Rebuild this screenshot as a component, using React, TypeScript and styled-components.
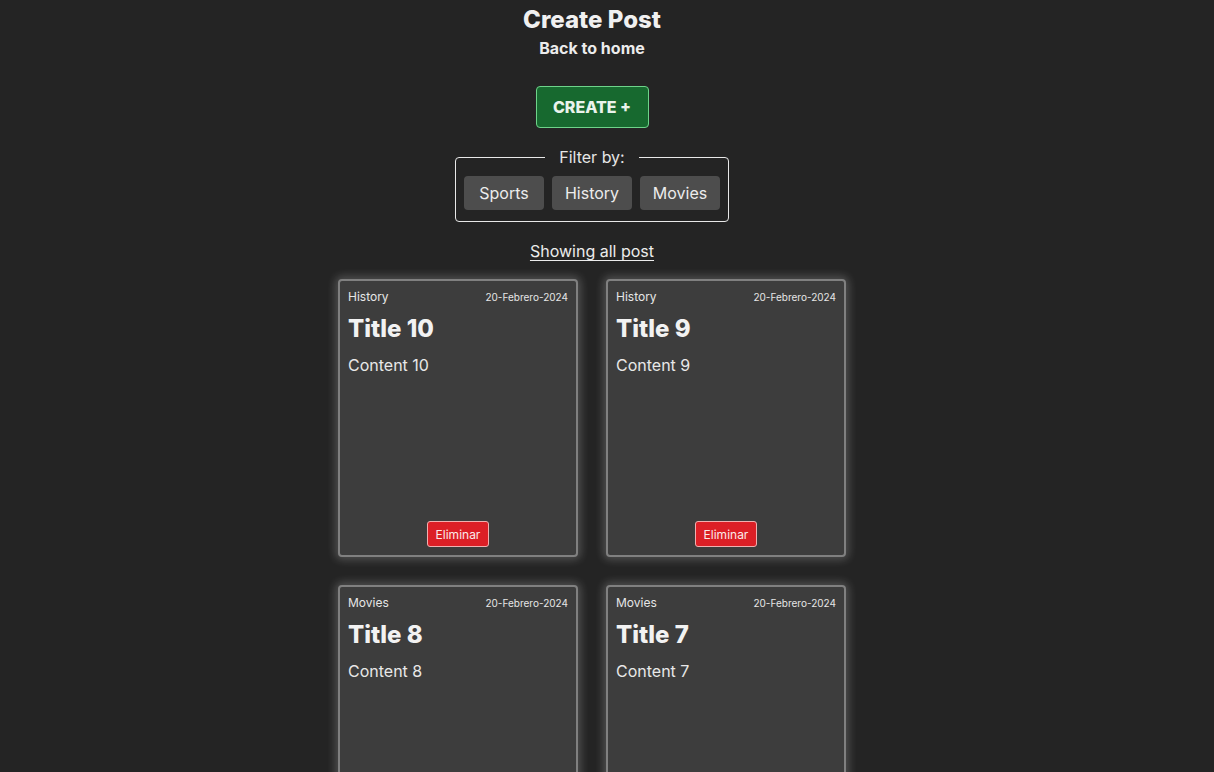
import React from "react";
import styled, { createGlobalStyle } from "styled-components";

const Global = createGlobalStyle`
  html, body { margin: 0; padding: 0; background: #242424; }
  body {
    font-family: Inter, "Noto Sans", sans-serif;
    color: rgba(255,255,255,0.87);
  }
  * { box-sizing: border-box; }
`;

const Page = styled.div`
  width: 1184px;
  display: flex;
  flex-direction: column;
  align-items: center;
  padding-top: 5px;
`;

const Title = styled.h1`
  margin: 0;
  font-size: 24px;
  line-height: 30px;
  font-weight: 800;
  color: #f0f0f0;
`;

const BackLink = styled.a`
  margin-top: 3px;
  font-size: 16px;
  font-weight: 700;
  line-height: 20px;
  color: #ececec;
  text-decoration: none;
`;

const CreateButton = styled.button`
  margin-top: 28px;
  width: 113px;
  height: 42px;
  background: #17692f;
  border: 1px solid #6ed38a;
  border-radius: 4px;
  color: #eaf3ec;
  font-family: inherit;
  font-size: 16px;
  font-weight: 800;
`;

const Filter = styled.fieldset`
  margin: 20px 0 0;
  width: 274px;
  padding: 10px 8px 11px;
  border: 1px solid #e8e8e8;
  border-radius: 4px;
  display: flex;
  gap: 8px;
  justify-content: center;
`;

const Legend = styled.legend`
  padding: 0 14px;
  margin: 0 auto;
  font-size: 16px;
  line-height: 18px;
  color: #e6e6e6;
`;

const FilterButton = styled.button`
  width: 80px;
  height: 34px;
  border: none;
  border-radius: 4px;
  background: #4d4d4d;
  color: #ececec;
  font-family: inherit;
  font-size: 16px;
`;

const Showing = styled.a`
  margin-top: 18px;
  font-size: 16px;
  line-height: 22px;
  color: #ececec;
  text-decoration: underline;
  text-underline-offset: 3px;
`;

const Grid = styled.div`
  margin-top: 17px;
  display: grid;
  grid-template-columns: 240px 240px;
  gap: 28px;
`;

const Card = styled.article`
  width: 240px;
  height: 278px;
  background: #3d3d3d;
  border: 2px solid #808080;
  border-radius: 4px;
  box-shadow: 0 0 9px 3px rgba(255, 255, 255, 0.2);
  padding: 8px;
  display: flex;
  flex-direction: column;
`;

const CardHead = styled.div`
  display: flex;
  justify-content: space-between;
  align-items: center;
`;

const Category = styled.span`
  font-size: 12px;
  color: #e6e6e6;
`;

const DateText = styled.span`
  font-size: 10px;
  color: #e6e6e6;
`;

const CardTitle = styled.h2`
  margin: 10px 0 0;
  font-size: 24px;
  line-height: 30px;
  font-weight: 800;
  color: #f2f2f2;
`;

const Content = styled.p`
  margin: 11px 0 0;
  font-size: 16px;
  line-height: 20px;
  color: #e8e8e8;
`;

const DeleteButton = styled.button`
  margin-top: auto;
  align-self: center;
  height: 26px;
  padding: 0 8px;
  background: #dc1f26;
  border: 1px solid #f0b0b0;
  border-radius: 3px;
  color: #fbeaea;
  font-family: inherit;
  font-size: 12px;
`;

const posts = [
  { id: 10, cat: "History" },
  { id: 9, cat: "History" },
  { id: 8, cat: "Movies" },
  { id: 7, cat: "Movies" },
];

export default function App() {
  return (
    <>
      <Global />
      <Page>
        <Title>Create Post</Title>
        <BackLink href="#">Back to home</BackLink>
        <CreateButton>CREATE +</CreateButton>
        <Filter>
          <Legend>Filter by:</Legend>
          <FilterButton>Sports</FilterButton>
          <FilterButton>History</FilterButton>
          <FilterButton>Movies</FilterButton>
        </Filter>
        <Showing href="#">Showing all post</Showing>
        <Grid>
          {posts.map((p) => (
            <Card key={p.id}>
              <CardHead>
                <Category>{p.cat}</Category>
                <DateText>20-Febrero-2024</DateText>
              </CardHead>
              <CardTitle>Title {p.id}</CardTitle>
              <Content>Content {p.id}</Content>
              <DeleteButton>Eliminar</DeleteButton>
            </Card>
          ))}
        </Grid>
      </Page>
    </>
  );
}
